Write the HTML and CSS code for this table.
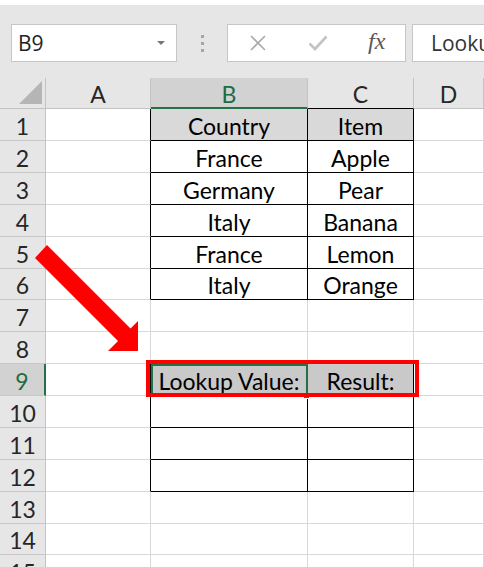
FILE: index.html
```html
<!DOCTYPE html>
<html>
<head>
<meta charset="utf-8">
<link rel="stylesheet" href="styles.css">
</head>
<body>
<div class="toolbar">
  <div class="namebox"><span class="nb-text">B9</span><span class="nb-caret"></span></div>
  <div class="dots"><i></i><i></i><i></i></div>
  <div class="fbtns">
    <svg class="ico-x" width="16" height="16" viewBox="0 0 16 16"><path d="M1 1 L15 15 M15 1 L1 15" stroke="#a9a9a9" stroke-width="1.6" fill="none"/></svg>
    <svg class="ico-ok" width="20" height="16" viewBox="0 0 20 16"><path d="M1.5 8.5 L7 14 L18.5 1.5" stroke="#c4c4c4" stroke-width="2.6" fill="none"/></svg>
    <span class="fx">fx</span>
  </div>
  <div class="finput">Lookup Value:</div>
</div>
<div class="sheet">
  <div class="grid">
    <div class="hc corner"><span class="tri"></span></div>
    <div class="hc">A</div>
    <div class="hc hsel">B</div>
    <div class="hc hblk">C</div>
    <div class="hc">D</div>

    <div class="rh">1</div><div class="c tl"></div><div class="c t g1">Country</div><div class="c t g1">Item</div><div class="c"></div>
    <div class="rh">2</div><div class="c tl"></div><div class="c t">France</div><div class="c t">Apple</div><div class="c"></div>
    <div class="rh">3</div><div class="c tl"></div><div class="c t">Germany</div><div class="c t">Pear</div><div class="c"></div>
    <div class="rh">4</div><div class="c tl"></div><div class="c t">Italy</div><div class="c t">Banana</div><div class="c"></div>
    <div class="rh">5</div><div class="c tl"></div><div class="c t">France</div><div class="c t">Lemon</div><div class="c"></div>
    <div class="rh">6</div><div class="c tl"></div><div class="c t">Italy</div><div class="c t">Orange</div><div class="c"></div>
    <div class="rh">7</div><div class="c"></div><div class="c"></div><div class="c"></div><div class="c"></div>
    <div class="rh">8</div><div class="c"></div><div class="c tt"></div><div class="c tt"></div><div class="c"></div>
    <div class="rh rsel">9</div><div class="c tl"></div><div class="c t g2">Lookup Value:</div><div class="c t g2">Result:</div><div class="c"></div>
    <div class="rh">10</div><div class="c tl"></div><div class="c t"></div><div class="c t"></div><div class="c"></div>
    <div class="rh">11</div><div class="c tl"></div><div class="c t"></div><div class="c t"></div><div class="c"></div>
    <div class="rh">12</div><div class="c tl"></div><div class="c t"></div><div class="c t"></div><div class="c"></div>
    <div class="rh">13</div><div class="c"></div><div class="c"></div><div class="c"></div><div class="c"></div>
    <div class="rh">14</div><div class="c"></div><div class="c"></div><div class="c"></div><div class="c"></div>
    <div class="rh">15</div><div class="c"></div><div class="c"></div><div class="c"></div><div class="c"></div>
  </div>
  <div class="selection"><span class="handle"></span></div>
  <div class="redbox"></div>
  <svg class="arrow" width="484" height="489" viewBox="0 0 484 489">
    <polygon points="47,167 130.5,250.5 138,243 138,273 108,273 118,263 35,180" fill="#ff0000"/>
  </svg>
</div>
</body>
</html>
```
FILE: styles.css
```css
html, body {
  margin: 0;
  padding: 0;
  background: #ffffff;
  overflow: hidden;
  width: 484px;
  height: 567px;
}

.toolbar {
  height: 78px;
  box-sizing: border-box;
  background: #e6e6e6;
  border-top: 5px solid #ffffff;
  display: flex;
  align-items: flex-start;
  padding-top: 19px;
  font-family: "Open Sans", "Noto Sans", sans-serif;
  white-space: nowrap;
}

.namebox {
  margin-left: 11px;
  width: 166px;
  height: 38px;
  box-sizing: border-box;
  background: #fff;
  border: 1px solid #c6c6c6;
  display: flex;
  align-items: center;
  justify-content: space-between;
  padding: 0 11px 0 6px;
  flex: none;
}

.nb-text {
  font-size: 21px;
  color: #222;
}

.nb-caret {
  width: 0;
  height: 0;
  border-left: 4px solid transparent;
  border-right: 4px solid transparent;
  border-top: 4px solid #777;
}

.dots {
  width: 50px;
  height: 38px;
  display: flex;
  flex-direction: column;
  align-items: center;
  justify-content: center;
  gap: 4px;
  flex: none;
}

.dots i {
  display: block;
  width: 3px;
  height: 3px;
  background: #a6a6a6;
}

.fbtns {
  width: 179px;
  height: 38px;
  box-sizing: border-box;
  background: #fff;
  border: 1px solid #c6c6c6;
  display: flex;
  align-items: center;
  flex: none;
  position: relative;
}

.ico-x {
  margin-left: 22px;
}

.ico-ok {
  margin-left: 42px;
}

.fx {
  margin-left: 40px;
  font-family: "Liberation Serif", "DejaVu Serif", serif;
  font-style: italic;
  font-size: 24px;
  color: #595959;
  line-height: 1;
  margin-top: -4px;
}

.finput {
  margin-left: 6px;
  width: 140px;
  height: 38px;
  box-sizing: border-box;
  background: #fff;
  border: 1px solid #c6c6c6;
  padding-left: 18px;
  font-size: 21px;
  line-height: 36px;
  color: #333;
  flex: none;
  overflow: hidden;
}

.sheet {
  position: relative;
}

.grid {
  display: grid;
  grid-template-columns: 46px 105px 157px 106px 70px;
  grid-template-rows: 31px 32px 32px 32px 32px 32px 31px 32px 32px 32px 32px 32px 32px 32px 31px 32px;
  font-family: Lato, "Open Sans", sans-serif;
  font-size: 23px;
  color: #000;
}

.grid > div {
  box-sizing: border-box;
  display: flex;
  align-items: center;
  justify-content: center;
  white-space: nowrap;
  overflow: hidden;
}

.hc {
  background: #e6e6e6;
  border-right: 1px solid #c3c3c3;
  border-bottom: 1px solid #c3c3c3;
  color: #262626;
  padding-top: 2px;
}

.corner {
  position: relative;
}

.tri {
  position: absolute;
  right: 3px;
  bottom: 4px;
  width: 0;
  height: 0;
  border-left: 23px solid transparent;
  border-bottom: 23px solid #b5b5b5;
}

.hsel {
  background: #d2d2d2;
  color: #1f6b41;
  border-bottom: 2px solid #217346;
}

.hblk {
  border-bottom: 1px solid #000;
}

.rh {
  background: #e6e6e6;
  border-right: 1px solid #c3c3c3;
  border-bottom: 1px solid #c8c8c8;
  color: #262626;
  padding-top: 2px;
}

.rsel {
  background: #d2d2d2;
  color: #1f6b41;
  border-right: 2px solid #217346;
}

.c {
  background: #fff;
  border-right: 1px solid #d8d8d8;
  border-bottom: 1px solid #d8d8d8;
  padding-top: 2px;
}

.c.t {
  border-right: 1px solid #000;
  border-bottom: 1px solid #000;
}

.c.tl {
  border-right: 1px solid #000;
}

.c.tt {
  border-bottom: 1px solid #000;
}

.g1 {
  background: #d9d9d9;
}

.g2 {
  background: #c9c9c9;
}

.selection {
  position: absolute;
  left: 151px;
  top: 286px;
  width: 157px;
  height: 32px;
  box-sizing: border-box;
  border: 2px solid #217346;
}

.handle {
  position: absolute;
  right: -4px;
  bottom: -5px;
  width: 7px;
  height: 6px;
  background: #217346;
  border: 1px solid #fff;
  box-sizing: border-box;
}

.redbox {
  position: absolute;
  left: 146px;
  top: 282px;
  width: 273px;
  height: 37px;
  box-sizing: border-box;
  border: 4px solid #ff0000;
}

.arrow {
  position: absolute;
  left: 0;
  top: 0;
  pointer-events: none;
}
```
